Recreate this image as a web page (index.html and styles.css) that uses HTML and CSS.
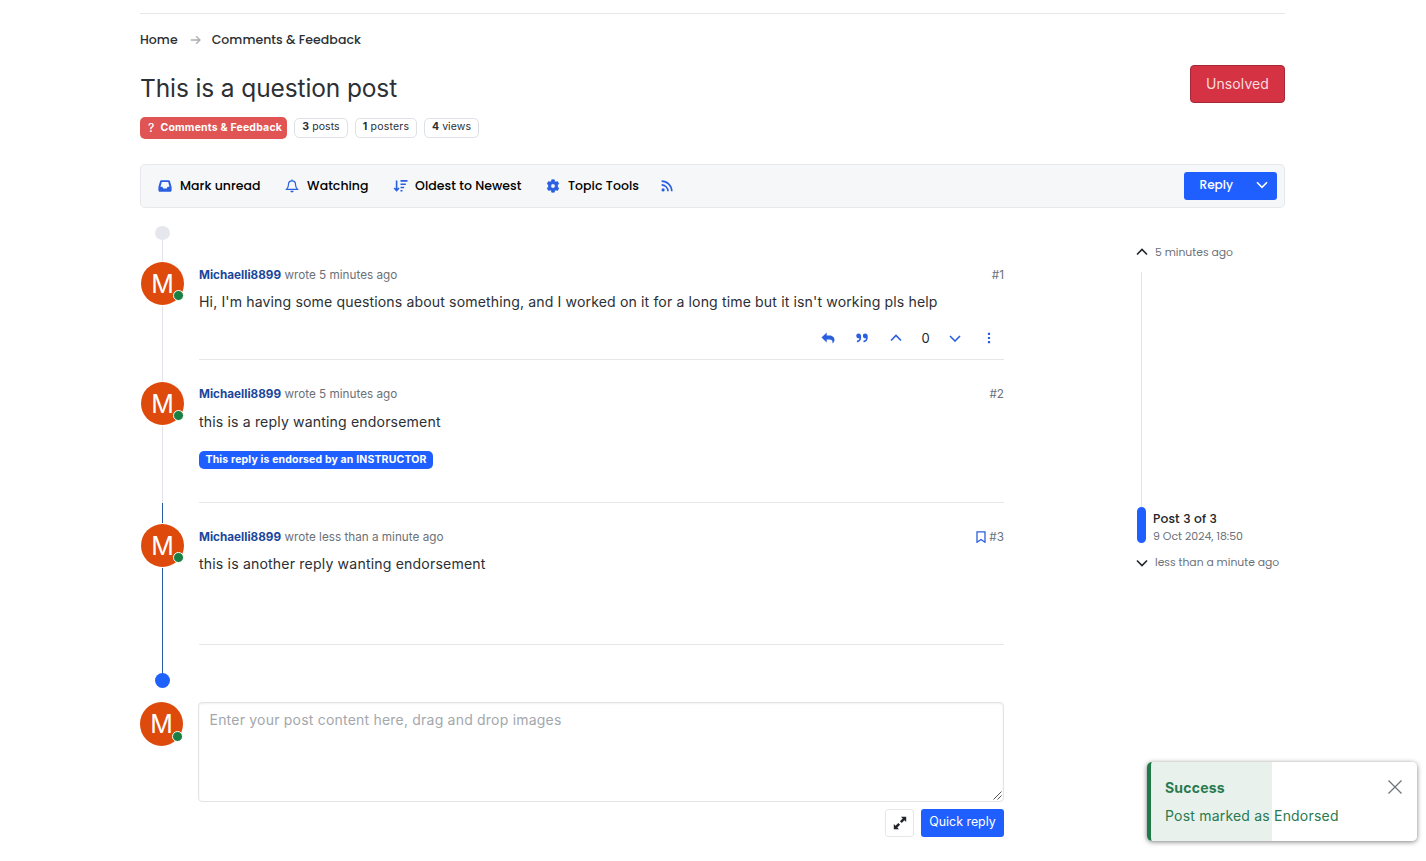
FILE: index.html
```html
<!DOCTYPE html>
<html lang="en">
<head>
<meta charset="utf-8">
<title>This is a question post</title>
<link rel="stylesheet" href="styles.css">
</head>
<body>
<div class="page">
  <nav class="breadcrumb">
    <a>Home</a>
    <svg class="crumb-arrow" width="11" height="10" viewBox="0 0 11 10"><path d="M.8 5h9M6.2 1.2 10 5 6.2 8.8"/></svg>
    <a>Comments &amp; Feedback</a>
  </nav>
  <header class="topic-head">
    <div class="topic-main">
      <h1 class="title">This is a question post</h1>
      <div class="tags">
        <span class="category"><span class="q">?</span>Comments &amp; Feedback</span>
        <span class="stat stat-posts"><span><b>3</b> posts</span></span>
        <span class="stat stat-posters"><span><b>1</b> posters</span></span>
        <span class="stat stat-views"><span><b>4</b> views</span></span>
      </div>
    </div>
    <button class="unsolved">Unsolved</button>
  </header>

  <div class="toolbar">
    <a class="tool"><svg width="14" height="14" viewBox="0 0 14 14"><path fill-rule="evenodd" d="M3.400 1.200h7.200c.7 0 1.100.3 1.300.9L13.600 8v3.200c0 .9-.6 1.500-1.500 1.500H1.900c-.9 0-1.500-.6-1.500-1.500V8l1.700-5.900c.2-.6.600-.9 1.300-.9ZM3.800 3 2.500 7.800h1.900l.9 1.700h3.400l.9-1.700h1.900L10.200 3Z"/></svg><span>Mark unread</span></a>
    <a class="tool"><svg width="14" height="14" viewBox="0 0 14 14"><path class="line" d="M7 .6v1.200M7 1.900c-2.200 0-3.500 1.600-3.500 3.500 0 2.600-.8 3.600-2 4.900h11c-1.200-1.300-2-2.300-2-4.900 0-1.900-1.300-3.500-3.500-3.500Z"/><path d="M5.300 11.700h3.400a1.700 1.700 0 0 1-3.400 0Z"/></svg><span>Watching</span></a>
    <a class="tool tool-sort"><svg width="15" height="14" viewBox="0 0 15 14"><path class="bold" d="M3.600 1.600v9.800M1.200 9l2.400 2.500L6 9M7.500 1.900h7M7.500 5.200h5.300M7.500 8.500h3.600M7.500 11.800h2"/></svg><span>Oldest to Newest</span></a>
    <a class="tool tool-tools"><svg width="14" height="14" viewBox="0 0 14 14"><path fill-rule="evenodd" stroke="#2a5fe0" stroke-width=".7" stroke-linejoin="round" d="M5.700.8h2.600l.4 1.700 1.100.6 1.700-.5 1.300 2.200-1.300 1.200v2l1.300 1.200-1.300 2.200-1.700-.5-1.100.6-.4 1.700H5.700l-.4-1.700-1.100-.6-1.700.5L1.200 9.200 2.500 8V6L1.200 4.800l1.300-2.200 1.700.5 1.100-.6ZM7 4.700a2.300 2.300 0 1 0 0 4.600 2.300 2.300 0 0 0 0-4.600Z"/></svg><span>Topic Tools</span></a>
    <a class="tool"><svg width="12" height="12" viewBox="0 0 12 12"><circle cx="2.100" cy="9.900" r="1.600"/><path class="bold" d="M.6 4.900a6.400 6.400 0 0 1 6.400 6.400M.6 1.100a10.200 10.200 0 0 1 10.200 10.200"/></svg></a>
    <button class="reply"><span>Reply</span><svg width="12" height="8" viewBox="0 0 12 8"><path d="M1 1.300 6 6.300l5-5"/></svg></button>
  </div>

  <div class="columns">
    <main class="thread">
      <div class="dot dot-start"></div>
      <article class="post post-1">
        <div class="rail"><div class="avatar">M<i></i></div></div>
        <div class="body">
          <div class="meta"><span><b>Michaelli8899</b> <span>wrote 5 minutes ago</span></span><span class="num">#1</span></div>
          <p class="text">Hi, I'm having some questions about something, and I worked on it for a long time but it isn't working pls help</p>
          <div class="actions">
            <svg width="14" height="12" viewBox="0 0 14 12"><path d="M5.700.5v2.900h2.600c3 0 5.200 1.700 5.200 4.400 0 1.600-.9 2.900-2.100 3.700.6-2.400-.3-3.900-3.200-3.900H5.700v2.900L.5 5.500Z"/></svg>
            <svg class="act-quote" width="12" height="10" viewBox="0 0 12 10"><path d="M.3 2.700C.3 1.400 1.300.5 2.600.5c1.500 0 2.500 1 2.500 2.600v1.700c0 2.500-1.400 4.300-3.600 4.400H.9V7.500h.6c1.100-.1 1.800-.8 1.900-2.200H2.600C1.300 5.300.3 4.300.3 2.700ZM6.900 2.700C6.900 1.400 7.900.5 9.200.5c1.500 0 2.500 1 2.500 2.600v1.700c0 2.500-1.400 4.300-3.600 4.400h-.6V7.500h.6c1.100-.1 1.800-.8 1.900-2.200h-.8c-1.300 0-2.300-1-2.300-2.600Z"/></svg>
            <svg class="act-up" width="12" height="8" viewBox="0 0 12 8"><path class="bold" d="m1 6.500 5-5 5 5"/></svg>
            <span class="votes">0</span>
            <svg class="act-down" width="12" height="8" viewBox="0 0 12 8"><path class="bold" d="m1 2 5 5 5-5"/></svg>
            <svg class="act-more" width="4" height="12" viewBox="0 0 4 12"><path d="M.9.8h2.200V3H.9ZM.9 4.900h2.200v2.200H.9ZM.9 9h2.200v2.200H.9Z"/></svg>
          </div>
        </div>
      </article>
      <article class="post post-2">
        <div class="rail"><div class="avatar">M<i></i></div></div>
        <div class="body">
          <div class="meta"><span><b>Michaelli8899</b> <span>wrote 5 minutes ago</span></span><span class="num">#2</span></div>
          <p class="text">this is a reply wanting endorsement</p>
          <div class="endorsed">This reply is endorsed by an INSTRUCTOR</div>
        </div>
      </article>
      <article class="post post-3">
        <div class="rail"><div class="avatar">M<i></i></div></div>
        <div class="body">
          <div class="meta"><span><b>Michaelli8899</b> <span>wrote less than a minute ago</span></span><span class="num"><svg width="10" height="12" viewBox="0 0 10 12"><path d="M1 .8h8v10.400L5 8.500l-4 2.700Z"/></svg>#3</span></div>
          <p class="text">this is another reply wanting endorsement</p>
        </div>
      </article>
      <div class="tail"></div>
      <div class="dot dot-end"></div>
      <form class="composer">
        <div class="avatar">M<i></i></div>
        <div class="editor">
          <div class="input"><span>Enter your post content here, drag and drop images</span><svg width="9" height="9" viewBox="0 0 9 9"><path d="M.5 8.500l8-8M4.500 8.500l4-4"/></svg></div>
          <div class="buttons">
            <div class="expand"><svg width="14" height="14" viewBox="0 0 14 14"><path d="M8 .8h5.200V6L11.500 4.300 8.700 7.100 6.900 5.300l2.800-2.800ZM6 13.200H.8V8l1.700 1.700 2.800-2.800 1.800 1.800-2.800 2.800Z"/></svg></div>
            <div class="quick">Quick reply</div>
          </div>
        </div>
      </form>
    </main>
    <aside class="scroller">
      <div class="end"><svg width="12" height="8" viewBox="0 0 12 8"><path d="m1 6.500 5-5 5 5"/></svg><span>5 minutes ago</span></div>
      <div class="track"></div>
      <div class="handle">
        <div class="knob"></div>
        <div class="info"><span class="position">Post 3 of 3</span><span>9 Oct 2024, 18:50</span></div>
      </div>
      <div class="end end-bottom"><svg width="12" height="8" viewBox="0 0 12 8"><path d="m1 1.500 5 5 5-5"/></svg><span>less than a minute ago</span></div>
    </aside>
  </div>
</div>
<div class="toast">
  <div class="toast-text"><b>Success</b><span>Post marked as Endorsed</span></div>
  <svg width="16" height="16" viewBox="0 0 16 16"><path d="m1.500 1.500 13 13M14.500 1.500l-13 13"/></svg>
</div>
</body>
</html>
```
FILE: styles.css
```css
*{box-sizing:border-box}
body{margin:0;height:861px;overflow:hidden;background:#fff;color:#212529;font-family:Inter,"Liberation Sans",sans-serif;font-size:14px}
svg{flex:none;display:block}
button{font:inherit}
.page{width:1145px;margin:13px 0 0 140px;border-top:1px solid #e6e7eb}
.breadcrumb{display:flex;align-items:center;height:20px;margin-top:16px;font-family:Poppins,Inter,sans-serif;font-weight:500;font-size:12.500px;letter-spacing:.04px;color:#2b2f33}
.crumb-arrow{margin:0 11px 0 12px;fill:none;stroke:#a9aeb3;stroke-width:1.3}
.topic-head{display:flex;justify-content:space-between;align-items:flex-start;height:114px;padding-top:15px}
.title{margin:7px 0 0;font-size:24.500px;font-weight:430;line-height:32px;letter-spacing:-.12px;color:#2c3035;white-space:nowrap}
.tags{display:flex;align-items:center;gap:7px;margin-top:13px}
.category{display:flex;align-items:center;width:147px;height:22px;padding:0 0 2px 8px;border-radius:5px;background:#e05453;color:#fff;font-size:10.500px;font-weight:700;letter-spacing:.19px;white-space:nowrap}
.q{width:12.500px;font-size:12px;font-weight:500}
.stat{display:flex;justify-content:center;width:54px;height:20px;border:1px solid #dee2e6;border-radius:5px;font-size:10.500px;line-height:16px;letter-spacing:.08px;color:#2c3035;white-space:nowrap}
.stat-posters{width:62px;letter-spacing:.2px}
.stat-views{width:55px}
.unsolved{width:95px;height:38px;padding:0 0 2px;border:1px solid #a32a36;border-radius:4px;background:#d53343;color:#f8dcdf;font-size:14px;letter-spacing:.1px}
.toolbar{display:flex;align-items:center;height:44px;padding:0 7px 0 16.500px;border:1px solid #e6e8ec;border-radius:5px;background:#f6f7f9;font-family:Poppins,Inter,sans-serif;font-weight:500;color:#000;font-size:12.500px}
.tool{display:flex;align-items:center;white-space:nowrap;letter-spacing:.04px;fill:#2a5fe0}
.tool svg{margin-right:8.500px}
.tool span{margin-right:24px}
.tool-sort svg{margin-right:7.500px}
.tool-tools span{margin-right:22.500px}
.line,.bold{fill:none;stroke:#2a5fe0;stroke-width:1.2}
.bold{stroke-width:1.600}
.reply{display:flex;align-items:center;width:93px;height:28px;margin-left:auto;padding:0 9px 2px 15.500px;justify-content:space-between;border:0;border-radius:3px;background:#1f5fff;color:#fff;font-size:12.100px}
.reply svg{fill:none;stroke:#fff;stroke-width:1.600}
.columns{display:flex;justify-content:space-between}
.thread{width:864px;padding-top:18px}
.dot{width:15px;height:14px;margin-left:15px;border-radius:50%;background:#e5e7ec}
.dot-end{height:15px;background:#1f62fb}
.post{display:flex;gap:14px;height:120px}
.post-2{height:143px}
.post-3{height:142px}
.rail,.tail{width:45px;background:linear-gradient(#e2e4e9,#e2e4e9) 22px 0/1px 100% no-repeat}
.rail{padding:22px 0 0 1px}
.post-3 .rail{padding-top:21px}
.post-3 .rail,.tail{background-image:linear-gradient(#2c5aa8,#2c5aa8)}
.tail{height:28px}
.avatar{position:relative;width:43px;height:43px;border-radius:50%;background:#dd4a0c;color:#fff;font-size:25px;line-height:45px;text-align:center}
.avatar i{position:absolute;right:0;bottom:4.500px;width:11px;height:11px;border:1px solid #fff;border-radius:50%;background:#198043}
.rail .avatar{box-shadow:0 0 0 1px #fff}
.composer .avatar{height:44px}
.body{width:805px;padding-top:26px;border-bottom:1px solid #e6e7ea}
.post-1 .body{padding-top:27px}
.meta{display:flex;justify-content:space-between;height:16px;line-height:16px;font-size:11.730px;color:#6b7178}
.meta b{color:#1b469c}
.num{display:flex;align-items:center;gap:3px}
.num svg{fill:none;stroke:#2a5fe0;stroke-width:1.300}
.text{margin:7px 0 0;font-size:14.100px;line-height:24px;letter-spacing:.123px;white-space:nowrap;color:#2c3035}
.post-2 .text{margin-top:8px;letter-spacing:.145px}
.post-3 .text{letter-spacing:.165px}
.actions{display:flex;align-items:center;justify-content:flex-end;height:24px;margin-top:12px;padding-right:13px;fill:#2a5fe0}
.act-quote{margin-left:21px}
.act-up{margin-left:22px}
.votes{width:9px;margin-left:19px;font-size:13px;text-align:center}
.act-down{margin-left:19px}
.act-more{margin-left:26px}
.endorsed{width:234px;height:18px;margin-top:17px;border-radius:5px;background:#1f5fff;color:#fff;font-size:10.500px;font-weight:700;line-height:17px;letter-spacing:.15px;text-align:center;white-space:nowrap}
.composer{display:flex;gap:15px;padding-top:14px}
.editor{width:806px}
.input{display:flex;justify-content:space-between;height:100px;padding:7px 1px 1px 10.500px;border:1px solid #e2e3e6;border-radius:4px;box-shadow:inset 0 1px 2px #00000010;color:#a3a7ac;font-size:14px;line-height:20px;letter-spacing:.21px}
.input svg{align-self:flex-end;stroke:#555;stroke-width:1}
.buttons{display:flex;justify-content:flex-end;gap:7px;margin-top:7px}
.expand{display:flex;align-items:center;justify-content:center;width:29px;height:28px;padding:0 0 1px;border:1px solid #e6e7ea;border-radius:3px;fill:#212529}
.quick{width:83px;height:28px;border-radius:3px;background:#1f5fff;color:#fff;font-size:12.400px;line-height:26px;text-align:center;white-space:nowrap}
.scroller{width:149px;padding-top:36px;font-family:Poppins,Inter,sans-serif;font-size:10.800px;color:#6b7178;white-space:nowrap}
.end{display:flex;align-items:center;height:16px;gap:7px}
.end span{padding-top:2px}
.end svg{fill:none;stroke:#212529;stroke-width:1.600}
.track{width:1px;height:235px;margin:12px 0 0 5px;background:#e2e4e9}
.handle{display:flex;gap:7px;height:36px;margin-left:1px}
.knob{width:9px;height:36px;border-radius:5px;background:#1f5fff}
.info{display:flex;flex-direction:column;padding-top:3px;font-size:10.960px;line-height:17px}
.position{font-size:12.300px;line-height:18px;letter-spacing:.13px;font-weight:500;color:#212529}
.end-bottom{margin-top:12px}
.end-bottom span{padding-top:0}
.toast{position:absolute;left:1147px;top:762px;display:flex;justify-content:space-between;width:270px;height:79px;padding:14px 14px 0 14px;border-left:4px solid #1f7a48;border-radius:5px;background:linear-gradient(90deg,#e8f1ec 121px,#fff 121px);box-shadow:0 1px 5px #00000080;color:#2a7a50;font-size:14px;letter-spacing:.2px}
.toast-text{display:flex;flex-direction:column;gap:4px;line-height:24px}
.toast svg{margin-top:3px;fill:none;stroke:#707579;stroke-width:1.300}
```
